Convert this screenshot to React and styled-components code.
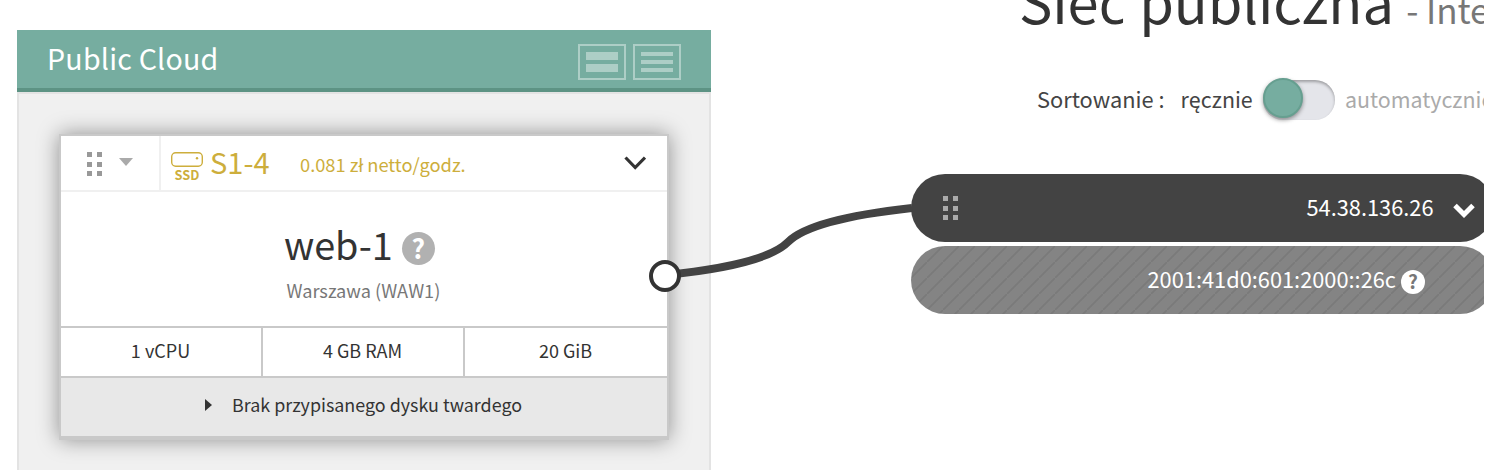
import React from "react";
import styled, { createGlobalStyle } from "styled-components";

const Global = createGlobalStyle`
  * { box-sizing: border-box; }
  body { margin: 0; background: #fff; color: #333; font-family: "Noto Sans CJK JP", "Noto Sans", sans-serif; }
  svg { display: block; flex: none; }
`;

const Page = styled.main`
  position: relative;
  display: flex;
  width: 1508px;
  height: 470px;
  overflow: hidden;
`;

const Panel = styled.section`
  width: 694px;
  height: 480px;
  margin: 30px 200px 0 17px;
  flex: none;
`;

const PanelHeader = styled.header`
  display: flex;
  align-items: center;
  height: 62px;
  padding: 0 30px 0 30px;
  background: #76ada0;
  border-bottom: 4px solid #5d9384;
`;

const PanelTitle = styled.h2`
  flex: 1;
  margin: 0;
  font-size: 28.6px;
  line-height: 58px;
  padding-bottom: 2px;
  font-weight: 400;
  letter-spacing: 0.22px;
  color: #fff;
`;

const ViewButton = styled.button`
  display: flex;
  flex-direction: column;
  gap: 4px;
  width: 48px;
  height: 36px;
  margin: 6px 0 0 7px;
  padding: 6px;
  background: none;
  border: 2px solid #adcec6;
`;

const ViewLine = styled.span`
  height: ${(p) => p.$size}px;
  background: #adcec6;
`;

const PanelBody = styled.div`
  height: 418px;
  padding: 40px;
  background: #f0f0f0;
  border: 2px solid #e3e3e3;
`;

const Card = styled.article`
  width: 610px;
  height: 306px;
  background: #fff;
  border: 2px solid #c9c9c9;
  border-bottom-width: 4px;
  box-shadow: 0 0 20px rgba(0, 0, 0, 0.4);
`;

const CardTop = styled.div`
  display: flex;
  height: 56px;
  border-bottom: 2px solid #f0f0f0;
`;

const HandleCell = styled.div`
  display: flex;
  width: 100px;
  padding: 16px 0 0 26px;
  gap: 17px;
  border-right: 2px solid #f0f0f0;
`;

const Dots = styled.span`
  display: grid;
  grid-template-columns: 5px 5px;
  grid-auto-rows: 5px;
  gap: 4.6px 5px;
  width: 15px;
  height: 25px;
  i { background: ${(p) => p.$color}; }
`;

const Caret = styled.svg`
  margin-top: 6px;
`;

const Offer = styled.div`
  display: flex;
  flex: 1;
  padding-left: 10px;
  color: #cdae3c;
`;

const Disk = styled.div`
  width: 32px;
  padding-top: 16px;
`;

const DiskLabel = styled.div`
  font-size: 12.8px;
  line-height: 15px;
  font-weight: 700;
  text-align: center;
`;

const Model = styled.div`
  width: 97px;
  padding-left: 7px;
  font-size: 29px;
  line-height: 50px;
`;

const Price = styled.div`
  flex: 1;
  font-size: 18.3px;
  line-height: 56px;
`;

const Toggle = styled.svg`
  margin: 20px 21.5px 0 0;
`;

const CardMain = styled.div`
  display: flex;
  flex-direction: column;
  height: 134px;
  padding-top: 28px;
`;

const NameRow = styled.div`
  display: flex;
  height: 56px;
  padding-left: 223px;
  gap: 9px;
`;

const Name = styled.h3`
  margin: 0;
  font-weight: 400;
  font-size: 37.8px;
  line-height: 47px;
`;

const Help = styled.span`
  flex: none;
  width: ${(p) => p.$size}px;
  height: ${(p) => p.$size}px;
  margin-top: ${(p) => p.$top}px;
  border-radius: 50%;
  background: ${(p) => p.$bg};
  color: ${(p) => p.$fg};
  font-size: ${(p) => p.$size * 0.8}px;
  line-height: ${(p) => p.$size - 1}px;
  font-weight: 700;
  text-align: center;
`;

const Region = styled.div`
  padding-left: 225.5px;
  font-size: 18.2px;
  line-height: 28px;
  color: #777;
`;

const Specs = styled.div`
  display: grid;
  grid-template-columns: repeat(3, 202px);
  height: 52px;
  border-top: 2px solid #c9c9c9;
  border-bottom: 2px solid #c9c9c9;
`;

const Spec = styled.div`
  font-size: 18px;
  line-height: 45px;
  padding-right: 1px;
  text-align: center;
  &:not(:last-child) { border-right: 2px solid #c9c9c9; }
`;

const CardFooter = styled.div`
  display: flex;
  height: 58px;
  padding-left: 144px;
  gap: 20px;
  background: #e8e8e8;
  font-size: 17.9px;
  line-height: 53px;
`;

const FooterCaret = styled.svg`
  margin-top: 21px;
`;

const Network = styled.section`
  width: 573px;
  height: 470px;
  overflow: hidden;
  white-space: nowrap;
`;

const NetworkTitle = styled.h1`
  height: 48px;
  margin: 0 0 0 108px;
  font-size: 56px;
  line-height: 0;
  font-weight: 400;
  letter-spacing: -0.1px;
`;

const Accented = styled.span`
  margin-right: 1.5px;
  font-family: "Noto Sans", sans-serif;
`;

const NetworkHint = styled.small`
  font-size: 35px;
  color: #777;
`;

const Sorting = styled.div`
  display: flex;
  height: 126px;
  padding: 32px 0 0 126px;
  line-height: 38px;
`;

const SortLabel = styled.span`
  width: ${(p) => p.$width}px;
  flex: none;
  font-size: ${(p) => p.$size}px;
  color: ${(p) => p.$color || "#444"};
`;

const Switch = styled.span`
  width: 72px;
  height: 40px;
  margin: 0 10px 0 0;
  flex: none;
  border-radius: 20px;
  background: #e4e5ea;
  box-shadow: inset 0 2px 3px rgba(0, 0, 0, 0.3);
`;

const Knob = styled.span`
  display: block;
  width: 40px;
  height: 40px;
  margin-top: -2px;
  border-radius: 50%;
  background: #76ada0;
  border: 2px solid #669f90;
  box-shadow: 0 2px 4px rgba(0, 0, 0, 0.4);
`;

const Address = styled.div`
  display: flex;
  width: 583px;
  height: 68px;
  margin-bottom: 4px;
  border-radius: 34px;
  color: #fff;
  font-size: 21.8px;
  line-height: 66px;
  background: ${(p) => (p.$striped
    ? "linear-gradient(135deg, #848484 44%, #7a7a7a 48%, #7a7a7a 52%, #848484 56%) 0 0 / 16px 16px"
    : "#434343")};
`;

const AddressHandle = styled.div`
  width: 395.5px;
  padding: 22px 0 0 32px;
`;

const AddressChevron = styled.svg`
  margin: 29px 0 0 19px;
`;

const StripedText = styled.div`
  padding-left: 236.5px;
  margin-right: 5px;
`;

const Link = styled.svg`
  position: absolute;
  left: 640px;
  top: 190px;
`;

const Grip = ({ color }) => (
  <Dots $color={color}>{[0, 1, 2, 3, 4, 5].map((n) => <i key={n} />)}</Dots>
);

export default function App() {
  return (
    <Page>
      <Global />
      <Panel>
        <PanelHeader>
          <PanelTitle>Public Cloud</PanelTitle>
          <ViewButton aria-label="large"><ViewLine $size={8} /><ViewLine $size={8} /></ViewButton>
          <ViewButton aria-label="list"><ViewLine $size={4} /><ViewLine $size={4} /><ViewLine $size={4} /></ViewButton>
        </PanelHeader>
        <PanelBody>
          <Card>
            <CardTop>
              <HandleCell>
                <Grip color="#999" />
                <Caret width="14" height="8" viewBox="0 0 14 8"><path d="M0 0H14L7 8Z" fill="#aaa" /></Caret>
              </HandleCell>
              <Offer>
                <Disk>
                  <svg width="32" height="15" viewBox="0 0 32 15" fill="none">
                    <rect x="0.7" y="0.7" width="30.6" height="13.6" rx="4" stroke="#cdae3c" strokeWidth="1.4" />
                    <circle cx="26" cy="6.3" r="1.2" fill="#cdae3c" />
                  </svg>
                  <DiskLabel>SSD</DiskLabel>
                </Disk>
                <Model>S1-4</Model>
                <Price>0.081 zł netto/godz.</Price>
                <Toggle width="22" height="15" viewBox="0 0 22 15"><path d="M1.5 1.5L11.2 11.5L21 1.5" fill="none" stroke="#333" strokeWidth="3.2" /></Toggle>
              </Offer>
            </CardTop>
            <CardMain>
              <NameRow>
                <Name>web-1</Name>
                <Help $size={33} $top={12} $bg="#b1b1b1" $fg="#fff">?</Help>
              </NameRow>
              <Region>Warszawa (WAW1)</Region>
            </CardMain>
            <Specs>
              <Spec>1 vCPU</Spec>
              <Spec>4 GB RAM</Spec>
              <Spec>20 GiB</Spec>
            </Specs>
            <CardFooter>
              <FooterCaret width="7" height="12" viewBox="0 0 7 12"><path d="M0 0L7 6L0 12Z" fill="#333" /></FooterCaret>
              <span>Brak przypisanego dysku twardego</span>
            </CardFooter>
          </Card>
        </PanelBody>
      </Panel>
      <Network>
        <NetworkTitle>Sie<Accented>ć</Accented> publiczna <NetworkHint>- Internet</NetworkHint></NetworkTitle>
        <Sorting>
          <SortLabel $width={143.5} $size={21.8}>Sortowanie :</SortLabel>
          <SortLabel $width={82.5} $size={21.4}>ręcznie</SortLabel>
          <Switch><Knob /></Switch>
          <SortLabel $width={150} $size={21.4} $color="#aaa">automatycznie</SortLabel>
        </Sorting>
        <Address>
          <AddressHandle><Grip color="#aaa" /></AddressHandle>
          <span>54.38.136.26</span>
          <AddressChevron width="22" height="16" viewBox="0 0 22 16"><path d="M2 2.5L11 11.5L20 2.5" fill="none" stroke="#fff" strokeWidth="5" /></AddressChevron>
        </Address>
        <Address $striped>
          <StripedText>2001:41d0:601:2000::26c</StripedText>
          <Help $size={24} $top={24} $bg="#fff" $fg="#777">?</Help>
        </Address>
      </Network>
      <Link width="274" height="110" viewBox="640 190 274 110">
        <path d="M665 275Q765 265 788 242T912 208" fill="none" stroke="#434343" strokeWidth="8" />
        <circle cx="665" cy="276" r="14" fill="#fff" stroke="#333" strokeWidth="4" />
      </Link>
    </Page>
  );
}
